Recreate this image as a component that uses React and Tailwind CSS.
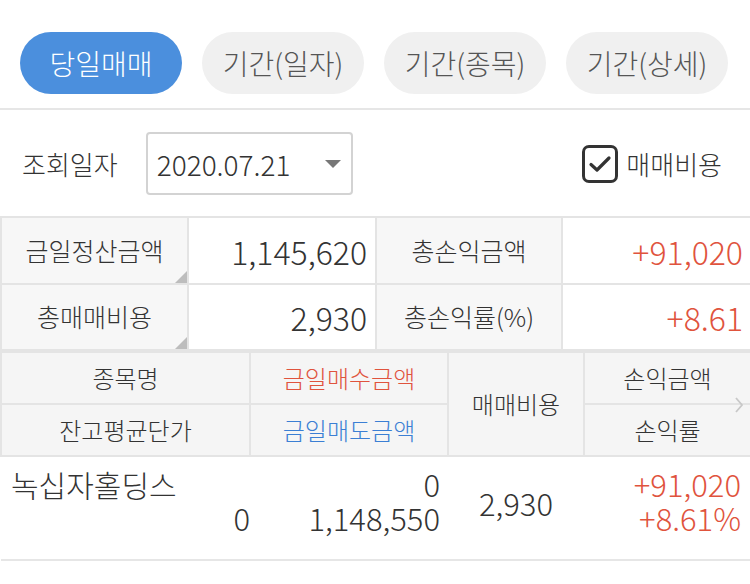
import React from 'react';

const tabs = ['당일매매', '기간(일자)', '기간(종목)', '기간(상세)'];

const Corner = () => (
    <span className="absolute bottom-0 right-0 w-0 h-0 border-l-[12px] border-l-transparent border-b-[12px] border-b-[#bdbdbd]" />
);

const App = () => {
    return (
        <div className="w-[750px] h-[584px] bg-white text-[#333] font-light overflow-hidden" style={{ fontFamily: '"Noto Sans CJK KR", "Noto Sans", sans-serif' }}>
            {/* Tabs */}
            <div className="flex gap-5 px-5 pt-8 pb-[14px] border-b-2 border-[#e6e6e6]">
                {tabs.map((t, i) => (
                    <button
                        key={t}
                        type="button"
                        className={
                            i === 0
                                ? 'w-[162px] h-[62px] rounded-full bg-[#4b8fdd] text-white text-[28px] leading-none'
                                : 'w-[162px] h-[62px] rounded-full bg-[#f0f0f0] text-[#555] text-[28px] leading-none'
                        }
                    >
                        {t}
                    </button>
                ))}
            </div>

            {/* Filter row */}
            <div className="flex items-center pt-[22px] pb-[21px] pl-[22px] pr-[28px]">
                <span className="text-[26px] mr-[28px]">조회일자</span>
                <div className="w-[207px] h-[63px] border-2 border-[#d3d3d3] rounded-[4px] flex items-center justify-between pl-[9px] pr-[10px]">
                    <span className="text-[28px]">2020.07.21</span>
                    <span className="w-0 h-0 border-l-[8px] border-r-[8px] border-t-[8px] border-l-transparent border-r-transparent border-t-[#777]" />
                </div>
                <div className="ml-auto flex items-center gap-[8px]">
                    <span className="w-[36px] h-[38px] border-[3px] border-[#333] rounded-[7px] flex items-center justify-center">
                        <svg width="24" height="20" viewBox="0 0 24 20" fill="none">
                            <path d="M3 10.5 L9 16 L21 4" stroke="#333" strokeWidth="3.2" strokeLinecap="round" strokeLinejoin="round" />
                        </svg>
                    </span>
                    <span className="text-[26px]">매매비용</span>
                </div>
            </div>

            {/* Summary */}
            <table className="w-[750px] table-fixed border-collapse">
                <colgroup>
                    <col className="w-[187px]" />
                    <col className="w-[188px]" />
                    <col className="w-[186px]" />
                    <col className="w-[189px]" />
                </colgroup>
                <tbody>
                    <tr className="h-[67px]">
                        <td className="relative border-2 border-[#e4e4e4] bg-[#f7f7f7] text-center text-[25px]">
                            금일정산금액
                            <Corner />
                        </td>
                        <td className="border-2 border-[#e4e4e4] text-right pr-[8px] text-[32px]">1,145,620</td>
                        <td className="border-2 border-[#e4e4e4] bg-[#f7f7f7] text-center text-[25px]">총손익금액</td>
                        <td className="border-2 border-[#e4e4e4] text-right pr-[7px] text-[32px] text-[#e0533d]">+91,020</td>
                    </tr>
                    <tr className="h-[66px]">
                        <td className="relative border-2 border-[#e4e4e4] bg-[#f7f7f7] text-center text-[25px]">
                            총매매비용
                            <Corner />
                        </td>
                        <td className="border-2 border-[#e4e4e4] text-right pr-[8px] text-[32px]">2,930</td>
                        <td className="border-2 border-[#e4e4e4] bg-[#f7f7f7] text-center text-[25px]">총손익률(%)</td>
                        <td className="border-2 border-[#e4e4e4] text-right pr-[7px] text-[32px] text-[#e0533d]">+8.61</td>
                    </tr>
                </tbody>
            </table>

            {/* Header + rows */}
            <table className="w-[750px] table-fixed border-collapse">
                <colgroup>
                    <col className="w-[249px]" />
                    <col className="w-[198px]" />
                    <col className="w-[136px]" />
                    <col className="w-[167px]" />
                </colgroup>
                <thead>
                    <tr className="h-[52px] bg-[#f5f5f5] text-[24px]">
                        <th className="font-light border-2 border-[#e4e4e4]">종목명</th>
                        <th className="font-light border-2 border-[#e4e4e4] text-[#e0533d]">금일매수금액</th>
                        <th rowSpan={2} className="font-light border-2 border-[#e4e4e4]">매매비용</th>
                        <th className="font-light border-2 border-[#e4e4e4]">손익금액</th>
                    </tr>
                    <tr className="h-[52px] bg-[#f5f5f5] text-[24px]">
                        <th className="font-light border-2 border-[#e4e4e4]">잔고평균단가</th>
                        <th className="font-light border-2 border-[#e4e4e4] text-[#3b7fd4]">금일매도금액</th>
                        <th className="relative font-light border-2 border-[#e4e4e4]">
                            손익률
                            <svg className="absolute right-[6px] -top-[9px]" width="10" height="18" viewBox="0 0 10 18" fill="none">
                                <path d="M2 2 L8 9 L2 16" stroke="#c8c8c8" strokeWidth="1.8" />
                            </svg>
                        </th>
                    </tr>
                </thead>
                <tbody>
                    <tr className="h-[104px] border-b-2 border-[#e6e6e6] text-[31px] leading-[34px]">
                        <td className="align-top pt-[10px] pl-[10px] pr-0">
                            <div className="text-left text-[30px]">녹십자홀딩스</div>
                            <div className="text-right">0</div>
                        </td>
                        <td className="align-top pt-[10px] pr-[8px] text-right">
                            <div>0</div>
                            <div>1,148,550</div>
                        </td>
                        <td className="text-center pb-[10px]">2,930</td>
                        <td className="align-top pt-[10px] pr-[10px] text-right text-[#e0533d]">
                            <div>+91,020</div>
                            <div>+8.61%</div>
                        </td>
                    </tr>
                </tbody>
            </table>
        </div>
    );
};

export default App;
